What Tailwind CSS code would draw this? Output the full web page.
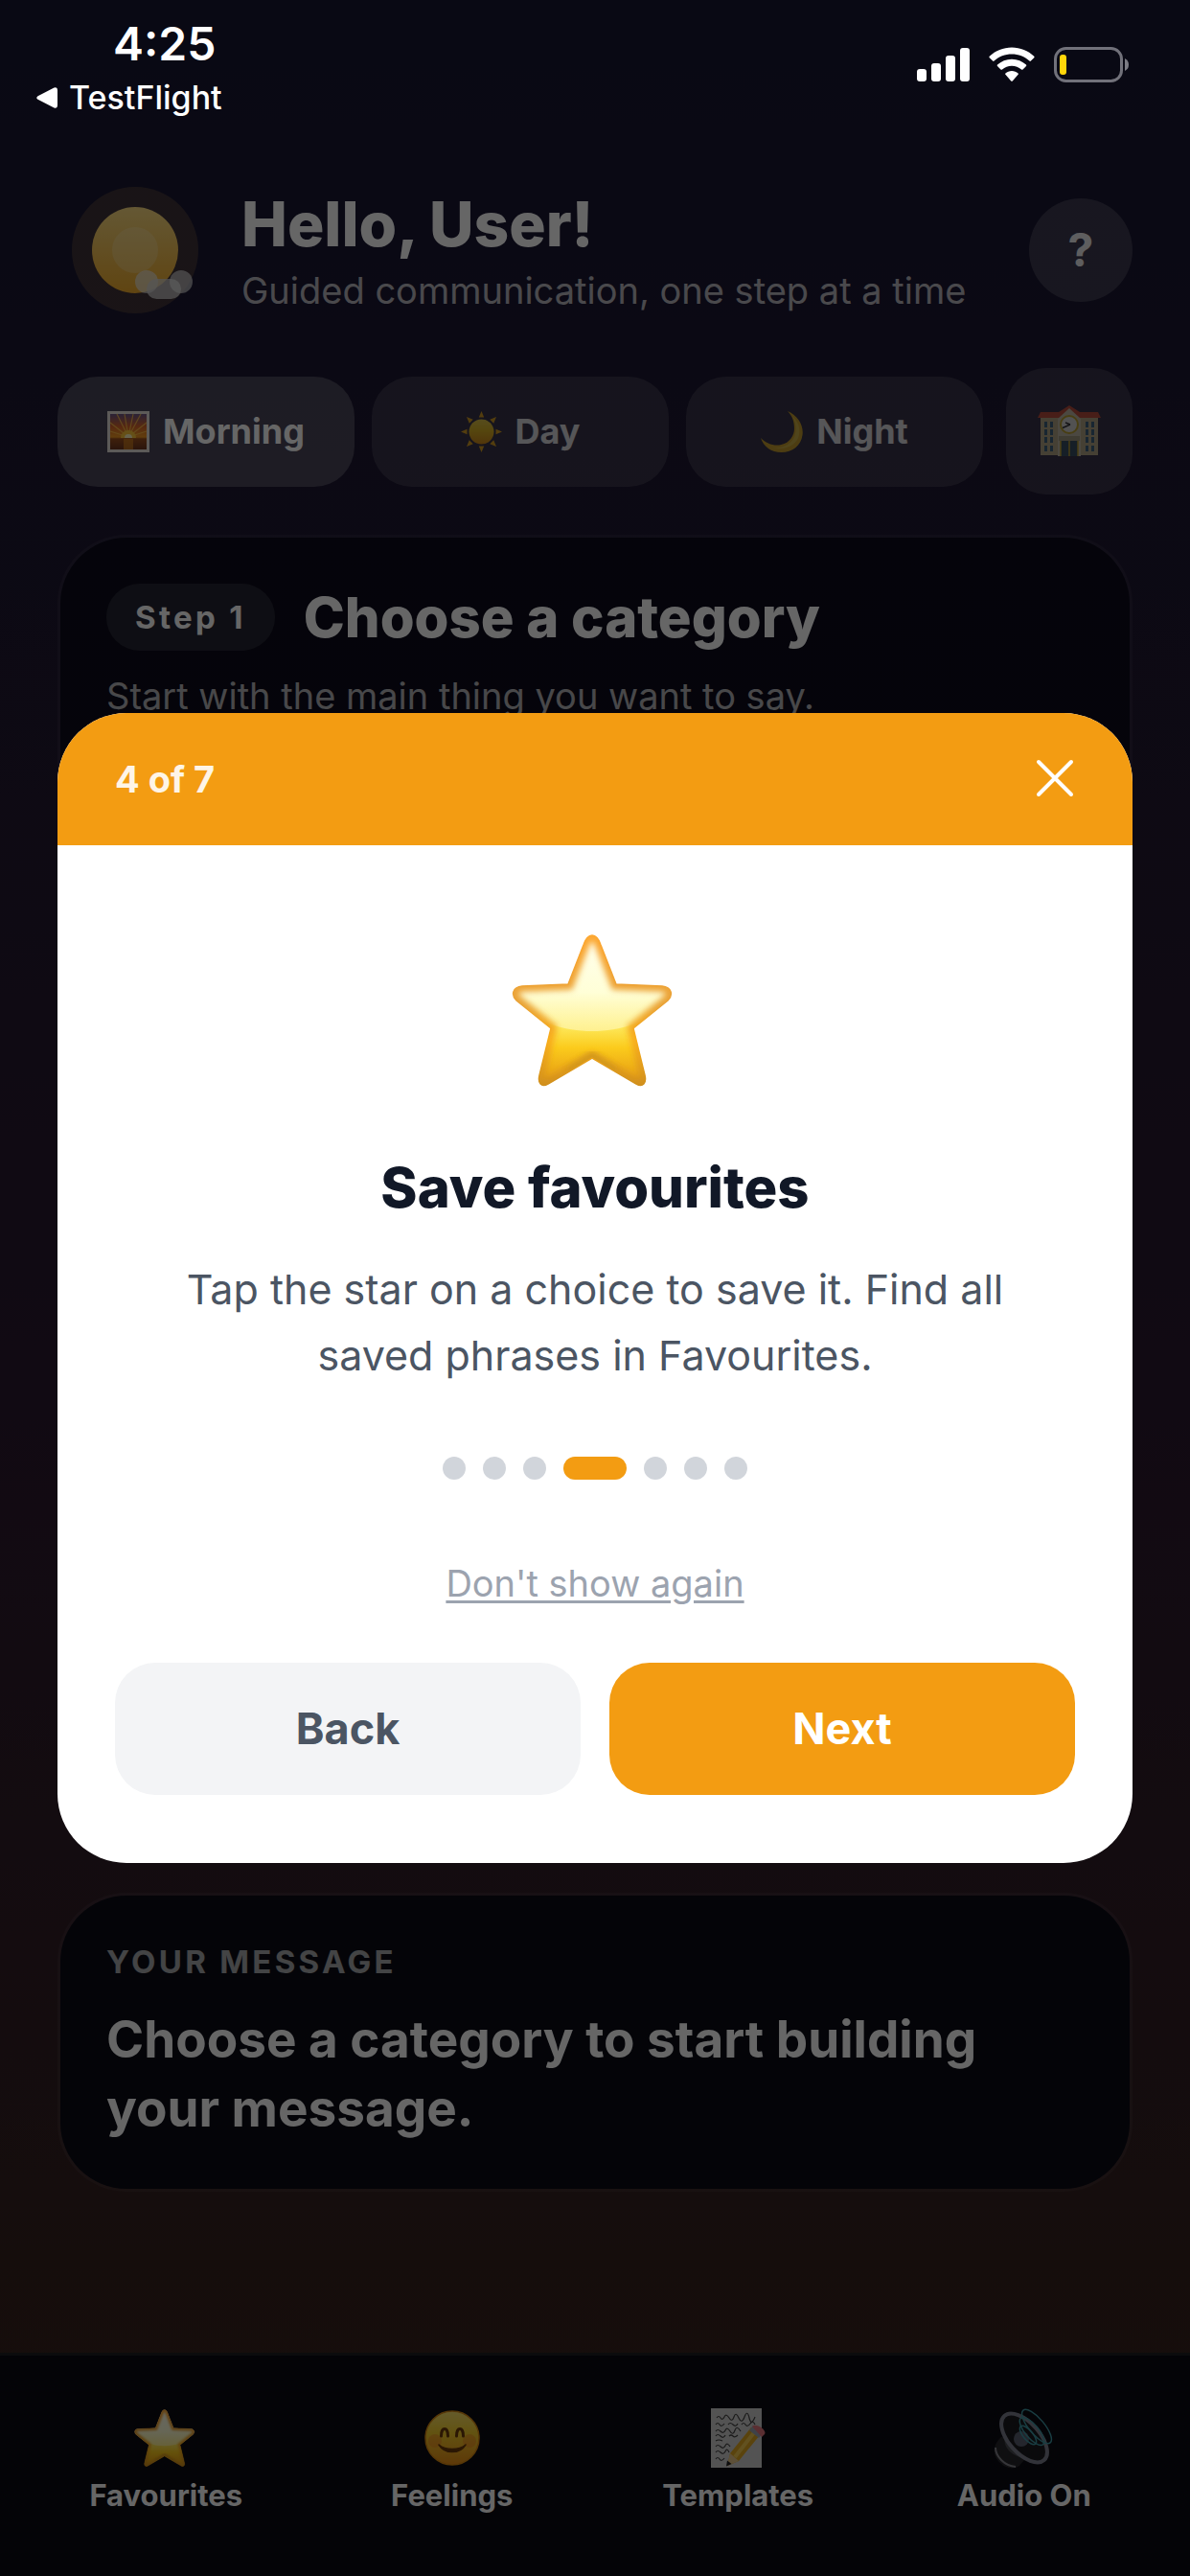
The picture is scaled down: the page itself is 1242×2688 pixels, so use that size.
<!DOCTYPE html>
<html lang="en">
<head>
  <meta charset="UTF-8">
  <meta name="viewport" content="width=device-width, initial-scale=1.0">
  <title>Guided communication</title>
  <script src="https://cdn.jsdelivr.net/npm/@tailwindcss/browser@4"></script>
</head>
<body class="font-['Inter',sans-serif] bg-[#171733]">
  <!-- shared star artwork, used in the dialog and the tab bar -->
  <svg class="absolute size-0" aria-hidden="true">
    <defs>
      <linearGradient id="starFill" x1="0" y1="0" x2="0" y2="1">
        <stop offset="0" stop-color="#ffffe8" />
        <stop offset=".38" stop-color="#fffdd5" />
        <stop offset=".6" stop-color="#fdea5e" />
        <stop offset=".75" stop-color="#fbcb1c" />
        <stop offset="1" stop-color="#e39512" />
      </linearGradient>
      <linearGradient id="starEdge" x1="0" y1="0" x2="0" y2="1">
        <stop offset="0" stop-color="#fda62e" />
        <stop offset=".45" stop-color="#e8a136" />
        <stop offset=".7" stop-color="#f9ad1a" />
        <stop offset="1" stop-color="#d08f1c" />
      </linearGradient>
      <linearGradient id="starShine" x1="0" y1="0" x2="0" y2="1">
        <stop offset="0" stop-color="#fffff0" />
        <stop offset=".6" stop-color="#ffffd8" />
        <stop offset="1" stop-color="#fff3a0" />
      </linearGradient>
      <filter id="soft" x="-20%" y="-20%" width="140%" height="140%"><feGaussianBlur stdDeviation="3" /></filter>
      <path id="starShape" d="M84 2 C88 2 91 6 93 12 L109 53 L157 55 C167 56 169 64 163 70 L127 99 L139 148 C141 156 137 161 130 157 L84 130 L38 157 C31 161 27 156 29 148 L41 99 L5 70 C-1 64 1 56 11 55 L59 53 L75 12 C77 6 80 2 84 2 Z" />
      <clipPath id="starClip"><use href="#starShape" /></clipPath>
      <symbol id="star" viewBox="0 0 175 160">
        <use href="#starShape" fill="url(#starFill)" />
        <g clip-path="url(#starClip)">
          <path d="M-10 0H178V60C150 90 118 102 84 102C50 102 18 90 -10 60Z" fill="url(#starShine)" opacity=".8" />
          <use href="#starShape" fill="none" stroke="url(#starEdge)" stroke-width="12" filter="url(#soft)" />
          <path d="M60 144 L84 127 L108 144" fill="none" stroke="#c9941a" stroke-width="7" filter="url(#soft)" opacity=".8" />
        </g>
        <use href="#starShape" fill="none" stroke="url(#starEdge)" stroke-width="1.5" />
      </symbol>
    </defs>
  </svg>

  <div class="relative min-h-screen flex flex-col bg-linear-to-b from-[#171733] from-0% via-[#2c1a30] via-55% to-[#3a2418] to-100%">

    <!-- status bar, stays above the backdrop -->
    <header class="relative z-20 flex justify-between pt-5 pb-[68px] pl-[38px] pr-[62px] text-white">
      <div>
        <div class="pl-20 text-[48px] leading-[52px] font-semibold">4:25</div>
        <a href="#" class="mt-2 flex items-center gap-3 text-[34px] leading-[44px] font-medium">
          <svg class="w-[22px] h-[22px]" viewBox="0 0 22 22" fill="currentColor"><path d="M1.5 9.2 18.5.6Q22 -.6 22 3V19Q22 22.6 18.5 21.4L1.5 12.8Q-1 11 1.5 9.2Z" /></svg>
          TestFlight
        </a>
      </div>
      <div class="mt-7 flex items-start gap-5">
        <svg class="w-[55px] h-[38px]" viewBox="0 0 55 38" fill="#fff">
          <rect x="0" y="24" width="10" height="13" rx="3" />
          <rect x="15" y="18" width="10" height="19" rx="3" />
          <rect x="30" y="10" width="10" height="27" rx="3" />
          <rect x="45" y="2" width="10" height="35" rx="3" />
        </svg>
        <svg class="w-[48px] h-[38px]" viewBox="0 0 48 38" fill="#fff">
          <path d="M24 1.5C33 1.5 41 5 47.3 10.7Q48 11.5 47.3 12.2L43.9 15.6Q43.2 16.3 42.4 15.6C37.5 11.2 31 8.6 24 8.6S10.5 11.2 5.6 15.6Q4.8 16.3 4.1 15.6L.7 12.2Q0 11.5 .7 10.7C7 5 15 1.5 24 1.5Z" />
          <path d="M24 13.8C29.8 13.8 35 16 39 19.6Q39.7 20.3 39 21L35.5 24.5Q34.8 25.1 34 24.5C31.3 22.2 27.8 20.8 24 20.8S16.7 22.2 14 24.5Q13.2 25.1 12.5 24.5L9 21Q8.3 20.3 9 19.6C13 16 18.2 13.8 24 13.8Z" />
          <path d="M24 26C26.5 26 28.8 26.9 30.6 28.4Q31.3 29.1 30.6 29.8L24.8 36.4Q24 37.2 23.2 36.4L17.4 29.8Q16.7 29.1 17.4 28.4C19.2 26.9 21.5 26 24 26Z" />
        </svg>
        <svg class="w-[80px] h-[39px]" viewBox="0 0 80 39">
          <rect x="1.5" y="2.5" width="69" height="34" rx="11" fill="none" stroke="#71717a" stroke-width="3" />
          <rect x="6" y="9" width="7" height="21" rx="3" fill="#ffd60a" />
          <path d="M74 13Q78 15 78 19.5T74 26Z" fill="#7c7c84" />
        </svg>
      </div>
    </header>

    <main class="flex-1 flex flex-col px-15">
      <div class="flex items-center pl-[15px]">
        <svg class="w-[132px] h-[132px] shrink-0" viewBox="0 0 132 132">
          <defs>
            <linearGradient id="avatarSun" x1="0" y1="0" x2="0" y2="1">
              <stop offset="0" stop-color="#fadb82" />
              <stop offset="1" stop-color="#efab2d" />
            </linearGradient>
          </defs>
          <circle cx="66" cy="66" r="66" fill="#fbbf60" opacity=".17" />
          <circle cx="66" cy="66" r="45" fill="url(#avatarSun)" />
          <circle cx="66" cy="66" r="24" fill="#fff3c4" opacity=".28" />
          <circle cx="78" cy="99" r="12" fill="#e9e9e6" opacity=".65" />
          <rect x="78" y="96" width="36" height="21" rx="10.5" fill="#d4d4d4" opacity=".75" />
          <circle cx="114" cy="99" r="12" fill="#e5e5e5" opacity=".65" />
        </svg>
        <div class="ml-[45px] flex-1">
          <h1 class="text-[64px] leading-[84px] font-extrabold text-white">Hello, User!</h1>
          <p class="text-[38px] leading-[54px] text-white/70">Guided communication, one step at a time</p>
        </div>
        <button aria-label="Help" class="size-[108px] shrink-0 rounded-full bg-white/15 text-[48px] font-bold text-white/90">?</button>
      </div>

      <div class="mt-[54px] flex items-center gap-6">
        <div class="flex-1 grid grid-cols-3 gap-[18px] text-[36px] leading-[43px] font-bold text-white">
          <button class="flex items-center justify-center gap-3.5 rounded-[42px] bg-white/20 py-9">
            <svg class="w-[44px] h-[43px]" viewBox="0 0 44 43">
              <defs>
                <linearGradient id="dawn" x1="0" y1="0" x2="0" y2="1">
                  <stop offset="0" stop-color="#6b5587" />
                  <stop offset=".35" stop-color="#d9652b" />
                  <stop offset=".65" stop-color="#f39a22" />
                  <stop offset=".7" stop-color="#9c4f1e" />
                  <stop offset="1" stop-color="#6b3520" />
                </linearGradient>
              </defs>
              <rect width="44" height="43" fill="#e6e2dc" />
              <rect x="3" y="3" width="38" height="37" fill="url(#dawn)" />
              <path d="M22 27 3 12M22 27 10 3M22 27 18 3M22 27 27 3M22 27 35 3M22 27 41 12M22 27 3 21M22 27 41 21" stroke="#ffc44a" stroke-width="1.2" opacity=".8" />
              <path d="M14 28A8 8 0 0 1 30 28Z" fill="#ffc93a" />
              <path d="M18 28A4 4 0 0 1 26 28Z" fill="#fff7c0" />
              <rect x="17" y="29" width="10" height="11" fill="#e08a22" opacity=".6" />
            </svg>
            Morning
          </button>
          <button class="flex items-center justify-center gap-3.5 rounded-[42px] bg-white/12 py-9">
            <svg class="w-[43px] h-[43px] opacity-80" viewBox="0 0 43 43">
              <defs>
                <linearGradient id="sunFill" x1="0" y1="0" x2="0" y2="1">
                  <stop offset="0" stop-color="#ffe14a" />
                  <stop offset=".45" stop-color="#fccf1d" />
                  <stop offset="1" stop-color="#ee9a12" />
                </linearGradient>
              </defs>
              <path fill="#f6b41c" d="M21.5 0 24.2 6.5H18.8ZM21.5 43 24.2 36.5H18.8ZM0 21.5 6.5 18.8V24.2ZM43 21.5 36.5 18.8V24.2ZM6 6 12.7 8.8 8.8 12.7ZM37 6 34.2 12.7 30.3 8.8ZM6 37 8.8 30.3 12.7 34.2ZM37 37 30.3 34.2 34.2 30.3Z" />
              <circle cx="21.5" cy="21.5" r="13" fill="url(#sunFill)" />
            </svg>
            <span class="text-white/80">Day</span>
          </button>
          <button class="flex items-center justify-center gap-3.5 rounded-[42px] bg-white/12 py-9">
            <svg class="w-[44px] h-[43px] opacity-80" viewBox="0 0 44 43">
              <path d="M28 0C39 5 45 15 43.5 25C42 36 33 43 21.5 43C11 43 3 37 0 28C6 34 14 37 21.5 35C30 33 35 26 35 18C35 11 33 5 28 0Z" fill="#e3b426" />
              <path d="M33 5C40 12 42 20 39 28C35 37 24 41 13 38C24 39 32 34 35 27C38 20 37 12 33 5Z" fill="#f5da5e" opacity=".6" />
            </svg>
            <span class="text-white/80">Night</span>
          </button>
        </div>
        <button aria-label="School" class="size-[132px] flex items-center justify-center rounded-[42px] bg-white/12">
          <svg class="w-[66px] h-[54px] opacity-80" viewBox="0 0 66 54">
            <rect x="3" y="12" width="60" height="40" fill="#c9bd91" />
            <path d="M3 7H22L33 0 44 7H63L66 13H0Z" fill="#d4533a" />
            <path d="M21 14 33 3 45 14V53H21Z" fill="#dcd5b8" />
            <g fill="#3f6b86">
              <path d="M7 17h3v6H7zM13 17h3v6h-3zM7 25h3v6H7zM13 25h3v6h-3zM7 33h3v6H7zM13 33h3v6h-3zM7 42h3v6H7zM13 42h3v6h-3z" />
              <path d="M50 17h3v6h-3zM56 17h3v6h-3zM50 25h3v6h-3zM56 25h3v6h-3zM50 33h3v6h-3zM56 33h3v6h-3zM50 42h3v6h-3zM56 42h3v6h-3z" />
            </g>
            <circle cx="33" cy="20" r="9" fill="#f4f4ef" stroke="#d3b52b" stroke-width="2" />
            <path d="M34 20 26 23.5M34 20 29 18" stroke="#333" stroke-width="1.5" />
            <path d="M22 32H44V37H22Z" fill="#b9b08c" />
            <rect x="24" y="37" width="18" height="16" fill="#37566a" />
            <path d="M24 37V53M33 37V53M42 37V53" stroke="#d3b52b" stroke-width="1.5" />
          </svg>
        </button>
      </div>

      <section class="mt-[42px] flex-1 rounded-[72px] border-3 border-white/5 bg-[#0b0b1a]/90 bg-clip-padding px-12 pt-12">
        <div class="flex items-center gap-[30px]">
          <span class="rounded-[35px] bg-white/10 px-[30px] py-[14px] text-[33px] leading-[42px] font-bold tracking-widest text-white">Step 1</span>
          <h2 class="text-[58px] leading-[70px] font-extrabold text-white">Choose a category</h2>
        </div>
        <p class="mt-5 text-[38px] leading-[54px] text-white/70">Start with the main thing you want to say.</p>
      </section>

      <section class="mt-32 mb-[168px] rounded-[72px] border-3 border-white/5 bg-[#0a0b16] bg-clip-padding px-12 py-12">
        <h3 class="text-[33px] leading-[42px] font-bold tracking-widest uppercase text-white/65">Your message</h3>
        <p class="mt-6 text-[53px] leading-[72px] font-bold text-white">Choose a category to start building your message.</p>
      </section>
    </main>

    <nav class="grid grid-cols-4 border-t-3 border-[#1e1e22] bg-[#0a0a12] px-6 pt-[54px] pb-[66px] text-[31px] leading-[36px] font-bold text-white">
      <a href="#" class="flex flex-col items-center gap-2.5">
        <svg class="w-[66px] h-16"><use href="#star" /></svg>
        Favourites
      </a>
      <a href="#" class="flex flex-col items-center gap-2.5">
        <svg class="w-16 h-16" viewBox="0 0 64 64">
          <defs>
            <linearGradient id="face" x1="0" y1="0" x2="0" y2="1">
              <stop offset="0" stop-color="#fbe36e" />
              <stop offset=".4" stop-color="#f6ce2c" />
              <stop offset="1" stop-color="#e98d16" />
            </linearGradient>
          </defs>
          <circle cx="32" cy="32" r="28" fill="url(#face)" stroke="#d98a12" stroke-width="1.5" />
          <circle cx="14" cy="35" r="7" fill="#ef6f1f" opacity=".35" />
          <circle cx="50" cy="35" r="7" fill="#ef6f1f" opacity=".35" />
          <path d="M20.5 30C20.5 20 27.5 20 27.5 30M36.5 30C36.5 20 43.5 20 43.5 30" fill="none" stroke="#6b3a0a" stroke-width="3" stroke-linecap="round" />
          <path d="M18 39C24 49 40 49 46 39C39 45 25 45 18 39Z" fill="#6b3a0a" stroke="#6b3a0a" stroke-width="1.5" stroke-linejoin="round" />
        </svg>
        Feelings
      </a>
      <a href="#" class="flex flex-col items-center gap-2.5">
        <svg class="w-16 h-16" viewBox="0 0 64 64">
          <rect x="4" y="1" width="53" height="62" fill="#cfcfcf" />
          <path d="M10 11q2-3 4 0t4-1 5 1 5-1 5 1 6-1 5 1 6-1M9 18q2-3 4 0t5-1M22 18q2-3 5 0t5-1M36 18q2-3 4 0t5-1 5 1M9 25q2-3 5 0t5-1 5 1 5-1 6 1M9 30q2-3 5 0t5-1M23 30q2-2 4 0t5-1M9 35q3-2 7 0M9 41q2-3 5 0t5-1 5 1M9 47q2-3 5 0t5-1 4 1M9 54q2-3 4 0t5-1" fill="none" stroke="#444" stroke-width="1.2" />
          <path d="M46 21 55 29 33 56 21 61 24 48Z" fill="#e0a922" />
          <path d="M50 25 29 52" stroke="#f4cb50" stroke-width="4" />
          <path d="M24 48 33 56 21 61Z" fill="#e8c88e" />
          <path d="M21 55.5 25.5 59 20 61.5Z" fill="#222" />
          <path d="M44 24 48 19 58 27 54 32Z" fill="#9da6b5" />
          <path d="M47 20C51 15 65 25 59 29L57 31Z" fill="#e0777d" />
        </svg>
        Templates
      </a>
      <button class="flex flex-col items-center gap-2.5">
        <svg class="w-16 h-16" viewBox="0 0 64 64">
          <path d="M8 31C0 38 -2 48 5 56C11 63 20 66 27 61L36 50 15 30Z" fill="#26262b" />
          <path d="M2 42C2 51 11 61 23 62" fill="none" stroke="#85858d" stroke-width="2" />
          <path d="M12 30C9 40 18 52 34 53L46 46 18 18Z" fill="#4a4b52" />
          <ellipse cx="32" cy="32" rx="31" ry="16" transform="rotate(48 32 32)" fill="#1a1a1f" stroke="#7e8090" stroke-width="4" />
          <circle cx="29" cy="33" r="8" fill="#5a6070" />
          <g fill="none" stroke="#3f99a5" stroke-width="1.5">
            <ellipse cx="36" cy="29" rx="12" ry="5" transform="rotate(50 36 29)" />
            <ellipse cx="40" cy="25" rx="18" ry="7" transform="rotate(50 40 25)" />
            <ellipse cx="45" cy="20" rx="22" ry="8" transform="rotate(50 45 20)" />
          </g>
        </svg>
        Audio On
      </button>
    </nav>

    <!-- backdrop and tour dialog -->
    <div class="absolute inset-0 z-10 flex items-center justify-center bg-black/60 px-15">
      <div role="dialog" aria-labelledby="tourTitle" class="w-full overflow-hidden rounded-[72px] bg-white text-center">
        <div class="flex h-[138px] items-center justify-between bg-[#f39c12] px-15">
          <span class="text-[38px] font-bold text-white/90">4 of 7</span>
          <button aria-label="Close">
            <svg class="w-[42px] h-[42px]" viewBox="0 0 42 42" stroke="#fff" stroke-width="4" stroke-linecap="round"><path d="M4 3 38 37M38 3 4 37" /></svg>
          </button>
        </div>
        <div class="px-15 pt-[92px] pb-[71px]">
          <svg class="mx-auto w-[175px] h-[160px]"><use href="#star" /></svg>
          <h2 id="tourTitle" class="mt-[69px] text-[58px] leading-[72px] font-extrabold text-[#111827]">Save favourites</h2>
          <p class="mt-9 px-12 text-[43px] leading-[69px] text-[#4b5563]">Tap the star on a choice to save it. Find all saved phrases in Favourites.</p>
          <div class="mt-[71px] flex justify-center gap-[18px]">
            <span class="size-6 rounded-full bg-[#d1d5db]"></span>
            <span class="size-6 rounded-full bg-[#d1d5db]"></span>
            <span class="size-6 rounded-full bg-[#d1d5db]"></span>
            <span class="h-6 w-[66px] rounded-full bg-[#f39c12]"></span>
            <span class="size-6 rounded-full bg-[#d1d5db]"></span>
            <span class="size-6 rounded-full bg-[#d1d5db]"></span>
            <span class="size-6 rounded-full bg-[#d1d5db]"></span>
          </div>
          <button class="mt-[81px] block mx-auto text-[38px] leading-[54px] text-[#9ca3af] underline decoration-3 underline-offset-4">Don't show again</button>
          <div class="mt-14 grid grid-cols-2 gap-[30px] text-[45px] font-bold">
            <button class="h-[138px] rounded-[42px] bg-[#f3f4f6] text-[#4b5563]">Back</button>
            <button class="h-[138px] rounded-[42px] bg-[#f39c12] text-white">Next</button>
          </div>
        </div>
      </div>
    </div>
  </div>
</body>
</html>
